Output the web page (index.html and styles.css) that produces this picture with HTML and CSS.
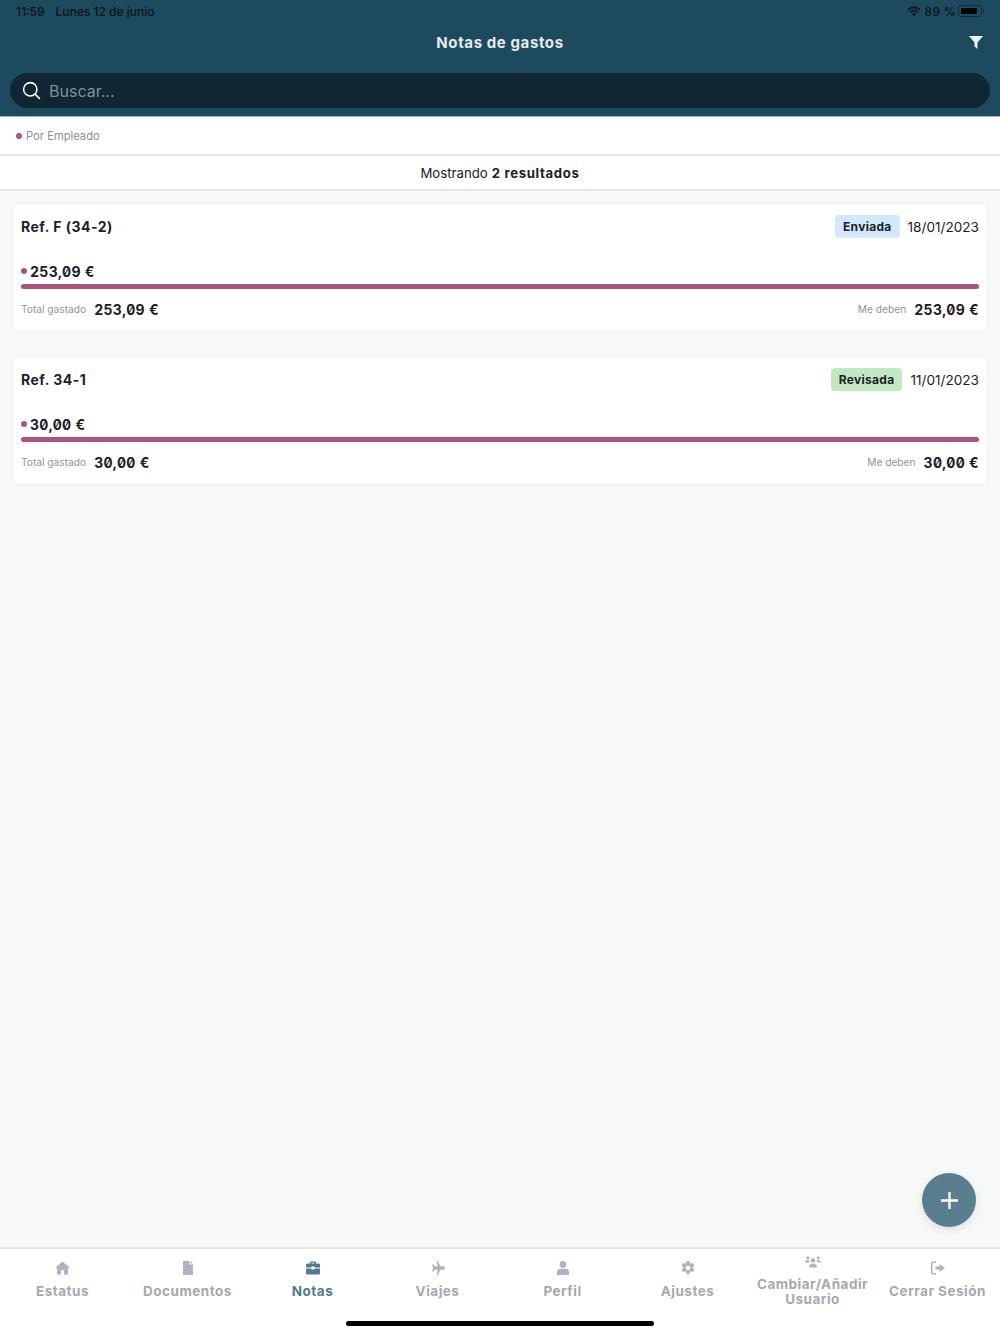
FILE: index.html
```html
<!DOCTYPE html>
<html lang="es">
<head>
    <meta charset="UTF-8">
    <meta name="viewport" content="width=device-width, initial-scale=1.0">
    <title>Notas de gastos</title>
    <link rel="stylesheet" href="styles.css">
</head>
<body>

<div class="app">
    <header class="header">
        <div class="status-bar">
            <div class="status-left"><span>11:59</span><span>Lunes 12 de junio</span></div>
            <div class="status-right">
                <svg class="wifi" viewBox="0 0 16 12" width="14" height="11"><path d="M8 2.2c2.4 0 4.600.9 6.300 2.500l1.200-1.300C13.500 1.500 10.900.4 8 .4S2.500 1.500.5 3.400l1.200 1.300C3.400 3.100 5.600 2.200 8 2.200z"/><path d="M8 5.900c1.400 0 2.700.5 3.700 1.500l1.200-1.300C11.600 4.800 9.900 4.100 8 4.100s-3.600.7-4.900 2l1.200 1.300c1-1 2.300-1.500 3.700-1.500z"/><path d="M8 7.800c-.9 0-1.700.4-2.300.9L8 11.300l2.300-2.600c-.6-.5-1.400-.9-2.300-.9z"/></svg>
                <span>89 %</span>
                <span class="battery"><span class="battery-level"></span></span>
                <span class="battery-tip"></span>
            </div>
        </div>
        <div class="title-row">
            <h1>Notas de gastos</h1>
            <svg class="filter-icon" viewBox="0 0 14 13" width="14" height="13"><path d="M0 0h14L8.500 6.500V13L5.500 10.500V6.500z"/></svg>
        </div>
        <div class="search">
            <svg viewBox="0 0 20 20" width="19" height="19" fill="none" stroke="#fff" stroke-width="1.600"><circle cx="8.700" cy="8.700" r="7"/><path d="M13.800 13.800l5 5"/></svg>
            <span>Buscar...</span>
        </div>
    </header>

    <div class="filter-row"><span class="dot"></span>Por Empleado</div>
    <div class="results-row">Mostrando <strong>2 resultados</strong></div>

    <main class="list">
        <article class="card">
            <div class="card-top">
                <span class="ref">Ref. F (34-2)</span>
                <div class="card-meta">
                    <span class="badge badge-sent">Enviada</span>
                    <span class="date">18/01/2023</span>
                </div>
            </div>
            <div class="amount"><span class="dot"></span>253,09 €</div>
            <div class="bar"></div>
            <div class="card-bottom">
                <div class="total"><span class="label">Total gastado</span><span class="value">253,09 €</span></div>
                <div class="total"><span class="label">Me deben</span><span class="value">253,09 €</span></div>
            </div>
        </article>

        <article class="card">
            <div class="card-top">
                <span class="ref">Ref. 34-1</span>
                <div class="card-meta">
                    <span class="badge badge-checked">Revisada</span>
                    <span class="date">11/01/2023</span>
                </div>
            </div>
            <div class="amount"><span class="dot"></span>30,00 €</div>
            <div class="bar"></div>
            <div class="card-bottom">
                <div class="total"><span class="label">Total gastado</span><span class="value">30,00 €</span></div>
                <div class="total"><span class="label">Me deben</span><span class="value">30,00 €</span></div>
            </div>
        </article>
    </main>

    <button class="fab" aria-label="Añadir">
        <svg viewBox="0 0 18 18" width="17" height="17"><path d="M7.800 0h2.400v7.800H18v2.400h-7.800V18H7.800v-7.800H0V7.800h7.800z"/></svg>
    </button>

    <nav class="tabbar">
        <a class="tab">
            <svg viewBox="0 0 16 14" width="15" height="14"><path d="M8 0L0 7h2.200v7h4.100V9.500h3.400V14h4.100V7H16z"/></svg>
            Estatus
        </a>
        <a class="tab">
            <svg viewBox="0 0 10 14" width="10" height="14"><path d="M1 0h5.500v3.500H10V13a1 1 0 0 1-1 1H1a1 1 0 0 1-1-1V1a1 1 0 0 1 1-1zM7.500 0L10 2.500H7.500z"/></svg>
            Documentos
        </a>
        <a class="tab active">
            <svg viewBox="0 0 14 13" width="14" height="13"><path d="M4 2V1a1 1 0 0 1 1-1h4a1 1 0 0 1 1 1v1h2.500A1.500 1.500 0 0 1 14 3.500V6H8.500V5h-3v1H0V3.500A1.500 1.500 0 0 1 1.500 2zM5.300 1.300V2h3.400v-.7zM0 7h5.500v1h3V7H14v4.500a1.500 1.500 0 0 1-1.500 1.500h-11A1.500 1.500 0 0 1 0 11.500z"/></svg>
            Notas
        </a>
        <a class="tab">
            <svg viewBox="0 0 15 14" width="15" height="14"><path d="M6.500 0h1.300l2.600 5.200h2.900c.9 0 1.700.8 1.700 1.800s-.8 1.800-1.700 1.800h-2.900L7.800 14H6.500l1.300-5.200H4.600L3.300 10.400H2.200L3 7 2.200 3.600h1.100l1.300 1.600h3.200z"/></svg>
            Viajes
        </a>
        <a class="tab">
            <svg viewBox="0 0 12 14" width="12" height="14"><circle cx="6" cy="3.400" r="3.400"/><path d="M3.500 7.800h5A3.500 3.500 0 0 1 12 11.300V14H0v-2.700a3.500 3.500 0 0 1 3.500-3.500z"/></svg>
            Perfil
        </a>
        <a class="tab">
            <svg viewBox="0 0 14 14" width="14" height="14" fill-rule="evenodd"><path d="M5.600 0h2.800l.4 2 1.300.7 1.900-.7L13.400 4.400 11.900 5.700v1.600l1.500 1.300-1.400 2.400-1.900-.7-1.300.7-.4 2H5.600l-.4-2-1.300-.7-1.900.7L.6 8.600l1.500-1.300V5.700L.6 4.400 2 2l1.900.7 1.300-.7zM7 4.700a2.300 2.300 0 1 0 0 4.600 2.300 2.300 0 0 0 0-4.600z"/></svg>
            Ajustes
        </a>
        <a class="tab tab-wide">
            <svg viewBox="0 0 16 12" width="16" height="12"><circle cx="8" cy="4.400" r="2.200"/><circle cx="2.800" cy="1.800" r="1.500"/><circle cx="13.200" cy="1.800" r="1.500"/><path d="M4 11.500c0-2.400 1.600-4 4-4s4 1.600 4 4zM0 6.500C0 4.900 1 4 2.800 4c.7 0 1.200.1 1.700.5-.5.700-.7 1.300-.8 2zM16 6.500c0-1.600-1-2.500-2.800-2.500-.7 0-1.200.1-1.700.5.500.7.7 1.300.8 2z"/></svg>
            Cambiar/Añadir Usuario
        </a>
        <a class="tab">
            <svg viewBox="0 0 14 13" width="14" height="13"><path d="M5 0v1.500H2.500a1 1 0 0 0-1 1v8a1 1 0 0 0 1 1H5V13H2.200A2.200 2.200 0 0 1 0 10.800V2.200A2.200 2.200 0 0 1 2.200 0zM8.500 2.500L14 6.500l-5.500 4V8H4.500V5h4z"/></svg>
            Cerrar Sesión
        </a>
    </nav>
    <div class="home-indicator"></div>
</div>

</body>
</html>
```

FILE: styles.css
```css
* {
    box-sizing: border-box;
}
body {
    margin: 0;
    font-family: Inter, "Noto Sans", sans-serif;
    color: #1c2127;
    background-color: #f7f9f9;
}
.app {
    position: relative;
    display: flex;
    flex-direction: column;
    height: 1334px;
    overflow: hidden;
}

/* header */
.header {
    height: 117px;
    padding: 0 10px;
    background-color: #1d4a5e;
    border-bottom: 1px solid #9fb4bd;
}
.status-bar {
    display: flex;
    justify-content: space-between;
    align-items: center;
    height: 24px;
    padding: 0 6px 2px 6px;
    font-size: 12px;
    font-weight: 500;
    color: #06141b;
}
.status-left {
    display: flex;
    gap: 11px;
}
.status-right {
    display: flex;
    align-items: center;
    gap: 4px;
    letter-spacing: 0.3px;
}
.wifi {
    fill: #06141b;
}
.battery {
    display: flex;
    width: 24px;
    height: 12px;
    margin-left: -2px;
    padding: 2px;
    border: 1px solid #0f2e3c;
    border-radius: 3px;
}
.battery-level {
    width: 89%;
    background-color: #000;
    border-radius: 1px;
}
.battery-tip {
    width: 1px;
    height: 4px;
    margin-left: -3px;
    background-color: #0f2e3c;
}
.title-row {
    display: flex;
    justify-content: center;
    align-items: center;
    position: relative;
    height: 36px;
}
.title-row h1 {
    margin: 0;
    font-size: 15px;
    font-weight: 700;
    letter-spacing: 0.6px;
    color: #e6ebee;
}
.filter-icon {
    position: absolute;
    right: 7px;
    top: 12px;
    fill: #eef1f2;
}
.search {
    display: flex;
    align-items: center;
    gap: 8px;
    height: 35px;
    margin-top: 13px;
    padding: 0 12px;
    border-radius: 18px;
    background-color: #0f2732;
    font-size: 16px;
    color: #7f929b;
}

/* filter and result rows */
.filter-row {
    display: flex;
    align-items: center;
    gap: 4px;
    height: 39px;
    padding: 0 16px;
    background-color: #fff;
    border-bottom: 2px solid #e3e5ea;
    font-size: 11.200px;
    color: #8b8f99;
}
.results-row {
    display: flex;
    justify-content: center;
    align-items: center;
    gap: 4px;
    height: 35px;
    background-color: #fff;
    border-bottom: 2px solid #e3e5ea;
    font-size: 13.200px;
    color: #1c2127;
}
.results-row strong {
    letter-spacing: 0.65px;
}
.dot {
    width: 6px;
    height: 6px;
    border-radius: 50%;
    background-color: #b0507c;
}

/* cards */
.list {
    flex: 1;
    display: flex;
    flex-direction: column;
    gap: 24px;
    padding: 12px 12px 0;
}
.card {
    height: 129px;
    padding: 0 8px;
    background-color: #fff;
    border: 1px solid #edeff0;
    border-radius: 4px;
}
.card-top {
    display: flex;
    justify-content: space-between;
    align-items: center;
    height: 45px;
}
.ref {
    font-size: 14px;
    font-weight: 700;
    letter-spacing: 0.5px;
}
.card-meta {
    display: flex;
    align-items: center;
    gap: 8px;
}
.badge {
    padding: 4px 8px;
    border-radius: 4px;
    font-size: 12px;
    font-weight: 700;
    letter-spacing: 0.3px;
}
.badge-sent {
    background-color: #d3e8fb;
}
.badge-checked {
    background-color: #c2e8c3;
}
.date {
    font-size: 13.600px;
}
.amount {
    display: flex;
    align-items: center;
    gap: 3px;
    height: 18px;
    margin-top: 13px;
    font-size: 14px;
    font-weight: 700;
    font-feature-settings: "zero", "tnum";
    letter-spacing: 0.3px;
}
.bar {
    height: 5px;
    margin-top: 4px;
    border-radius: 3px;
    background-color: #ad527b;
}
.card-bottom {
    display: flex;
    justify-content: space-between;
    align-items: center;
    height: 37px;
    padding-top: 3px;
}
.total {
    display: flex;
    align-items: center;
    gap: 8px;
}
.label {
    font-size: 10.200px;
    color: #8f939c;
}
.value {
    font-size: 14px;
    font-weight: 700;
    font-feature-settings: "zero", "tnum";
    letter-spacing: 0.3px;
}

/* floating button */
.fab {
    position: absolute;
    left: 922px;
    top: 1173px;
    display: flex;
    justify-content: center;
    align-items: center;
    width: 54px;
    height: 54px;
    padding: 0;
    border: none;
    border-radius: 50%;
    background-color: #5a7e8d;
    box-shadow: 0 3px 8px rgba(0,0,0,0.1);
}
.fab svg {
    fill: #fff;
}

/* tab bar */
.tabbar {
    display: grid;
    grid-template-columns: repeat(8, 1fr);
    height: 87px;
    background-color: #fff;
    border-top: 2px solid #e3e5ea;
}
.tab {
    display: flex;
    flex-direction: column;
    align-items: center;
    gap: 9px;
    padding-top: 12px;
    font-size: 13.500px;
    font-weight: 700;
    line-height: 15px;
    letter-spacing: 0.5px;
    text-align: center;
    color: #a6a9ae;
}
.tab svg {
    height: 14px;
    fill: #adb3bf;
}
.tab.active {
    color: #527a8a;
}
.tab.active svg {
    fill: #527a8a;
}
.tab-wide {
    gap: 8px;
    padding: 6px 4px 0;
    line-height: 14.500px;
}
.home-indicator {
    position: absolute;
    left: 346px;
    top: 1321px;
    width: 308px;
    height: 5px;
    border-radius: 3px;
    background-color: #000;
}
```
